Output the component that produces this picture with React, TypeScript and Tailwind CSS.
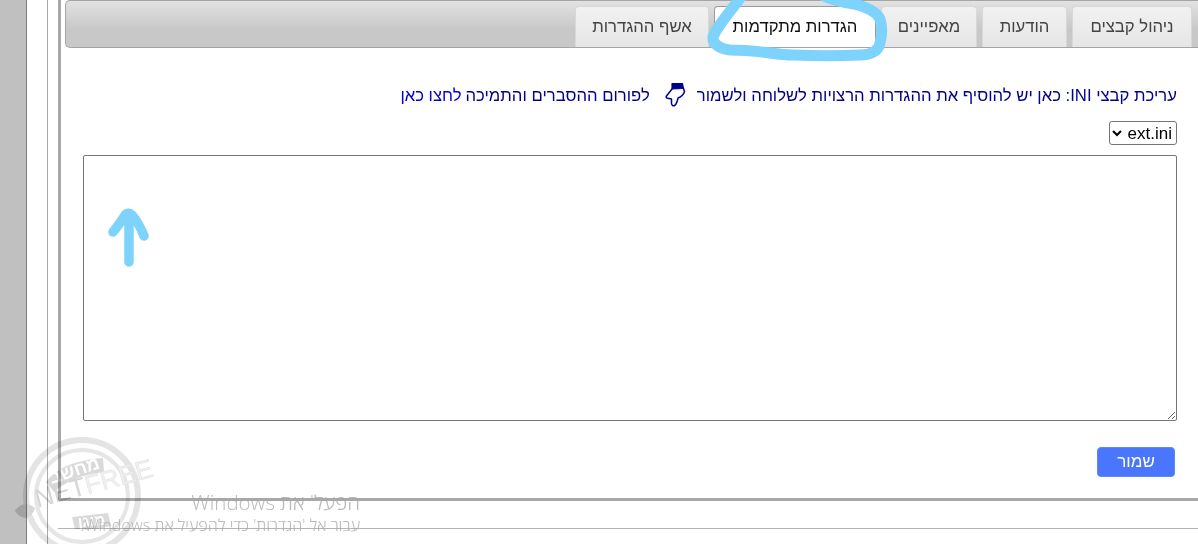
const font = "[font-family:'Liberation_Sans',Arial,sans-serif]";

function Tab({ label, active, width }: { label: string; active?: boolean; width: string }) {
  return (
    <div
      className={`${width} h-[41px] flex items-center justify-center rounded-t-[4px] text-[16.7px] border border-b-0 ${
        active
          ? "bg-white text-[#111] border-[#9a9a9a]"
          : "bg-gradient-to-b from-[#f1f1f1] to-[#e6e6e6] text-[#444] border-[#d8d8d8]"
      }`}
    >
      {label}
    </div>
  );
}

function PointingHand() {
  return (
    <svg width="22" height="26" viewBox="0 0 22 26" className="shrink-0 mr-[10px] ml-[15px] -mt-[2px]">
      <path d="M7 1.5h10.5l1 5L7 7z" fill="#00008b" stroke="#00008b" strokeWidth="1.2" strokeLinejoin="round" />
      <path
        d="M7 7 1.5 14c-.8 1.3-.3 2 1 2.2l4 .8v4.5c.3 2.4 2.2 3 3.6 1.6 1-1 1.6-2.2 2-3.6l1-3.5c3.4-1.4 5.6-3.6 6.4-6.5L18.5 6.5"
        fill="none"
        stroke="#00008b"
        strokeWidth="1.5"
        strokeLinecap="round"
        strokeLinejoin="round"
      />
    </svg>
  );
}

function Scribble() {
  return (
    <svg width="1198" height="544" viewBox="0 0 1198 544" className="absolute inset-0 pointer-events-none" fill="none">
      <path
        d="M741-3C730 12 717 26 713 37c-1 8 9 12 17 13 30 0 45 5 63 5 22 1 47 1 67 0 12 0 19-5 20-12 2-8 2-18 0-24-4-8-14-12-26-15-12-2-22-4-30-8"
        stroke="#7dd3fc"
        strokeWidth="11"
        strokeLinecap="round"
        strokeLinejoin="round"
      />
      <path
        d="M129 262V216M113 232c5-6 9-12 13-18 2-1 4-1 6 1 5 6 9 13 12 21"
        stroke="#7dd3fc"
        strokeWidth="9.5"
        strokeLinecap="round"
        strokeLinejoin="round"
      />
    </svg>
  );
}

function Stamp() {
  return (
    <svg width="170" height="124" viewBox="0 0 170 124" className="absolute left-0 top-[420px] pointer-events-none mix-blend-multiply">
      <circle cx="82" cy="76" r="56" fill="none" stroke="#e4e4e4" strokeWidth="6" />
      <circle cx="82" cy="76" r="46" fill="none" stroke="#e6e6e6" strokeWidth="4" />
      <path d="M46 62C56 48 76 40 103 38l1 14c-18 2-36 7-50 20z" fill="#dadada" />
      <text x="76" y="56" fontSize="18" fontWeight="700" fill="#fff" transform="rotate(-18 76 56)" textAnchor="middle" fontFamily="'Liberation Sans', sans-serif">
        מחשב
      </text>
      <path d="M72 97l36-4 3 13c-12 3-25 4-36 3z" fill="#dadada" />
      <text x="92" y="106" fontSize="15" fontWeight="700" fill="#fff" transform="rotate(-6 92 106)" textAnchor="middle" fontFamily="'Liberation Sans', sans-serif">
        מוגן
      </text>
      <text x="96" y="72" fontSize="26" transform="rotate(-15 96 72)" textAnchor="middle" fontFamily="'Liberation Sans', sans-serif">
        <tspan fill="#d6d6d6">NET</tspan>
        <tspan fill="#f0f0f0" stroke="#e2e2e2" strokeWidth="0.5">FREE</tspan>
      </text>
      <path d="M15 90c4-4 7-6 10-6s6 1 10 4c-1 5-5 9-10 10-5-1-9-4-10-8z" fill="#d8d8d8" />
    </svg>
  );
}

export default function App() {
  return (
    <div className={`relative h-[544px] w-[1198px] overflow-hidden flex bg-white ${font}`}>
      <div className="w-[27px] shrink-0 bg-[#c0c0c0] border-r border-[#7d7d7d]" />
      <div className="w-[21px] shrink-0 border-r border-[#a9a9a9]" />
      <div className="w-[10px] shrink-0" />
      <div className="flex-1 min-w-0 flex flex-col">
        <div className="h-[501px] border-l-[3px] border-b-[3px] border-[#a8a8a8] rounded-bl-[3px] pl-1 flex flex-col">
          <div
            dir="rtl"
            className="h-[48px] shrink-0 flex items-end gap-[5px] pr-[6px] rounded-l-[5px] border border-r-0 border-[#a5a5a5] bg-gradient-to-b from-[#e2e2e2] to-[#c8c8c8] to-60%"
          >
            <Tab label="ניהול קבצים" width="w-[120px]" />
            <Tab label="הודעות" width="w-[85px]" />
            <Tab label="מאפיינים" width="w-[96px]" />
            <Tab label="הגדרות מתקדמות" width="w-[162px]" active />
            <Tab label="אשף ההגדרות" width="w-[134px]" />
          </div>
          <div dir="rtl" className="flex-1 flex flex-col pr-[21px] pl-[18px]">
            <div className="mt-[34px] h-[28px] flex items-center text-[16.7px] text-[#00008b] whitespace-nowrap">
              <span>עריכת קבצי INI: כאן יש להוסיף את ההגדרות הרצויות לשלוחה ולשמור</span>
              <PointingHand />
              <span>לפורום ההסברים והתמיכה</span>
              <span className="text-[#0000cd] mr-1">לחצו כאן</span>
            </div>
            <div className="mt-[11px] h-[24px]">
              <select className="block w-[68px] h-[24px] text-[17px] text-black bg-white border border-[#767676] rounded-[3px] appearance-auto">
                <option>ext.ini</option>
              </select>
            </div>
            <textarea
              dir="ltr"
              className="block mt-[10px] w-full h-[266px] border border-[#767676] rounded-[2px] bg-white outline-none resize-y"
            />
            <div className="mt-[26px]">
              <button className="mr-[2px] w-[78px] h-[30px] rounded-[4px] bg-[#4a76fd] text-white text-[17px] border border-[#5f86fb]">
                שמור
              </button>
            </div>
          </div>
        </div>
        <div className="mt-[27px] border-t border-[#b4b4b4]" />
      </div>

      <Scribble />
      <Stamp />

      <div dir="rtl" className="absolute left-[60px] top-[489px] w-[300px] pointer-events-none text-[#a8a8a8] opacity-80 font-['Open_Sans',sans-serif]">
        <div className="text-[20.5px] leading-[27px] whitespace-nowrap font-light">הפעל' את Windows</div>
        <div className="text-[16.2px] leading-[18px] whitespace-nowrap font-light">עבור אל 'הגדרות' כדי להפעיל את Windows.</div>
      </div>
    </div>
  );
}
